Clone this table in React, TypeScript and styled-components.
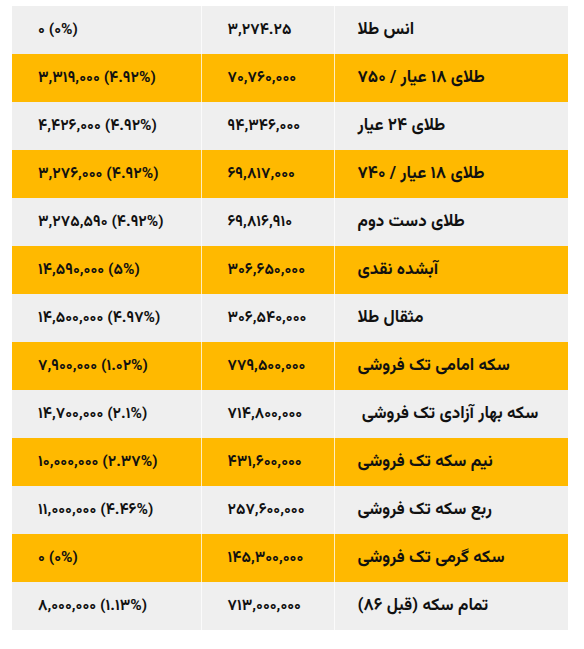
import React from 'react';
import styled, { createGlobalStyle } from 'styled-components';

const GlobalStyle = createGlobalStyle`
  html, body {
    margin: 0;
    padding: 0;
    background: #ffffff;
  }
`;

const Page = styled.div`
  padding: 6px 16px 20px 12px;
  font-family: 'Vazirmatn', 'Noto Sans Arabic', 'DejaVu Sans', sans-serif;
`;

const Table = styled.table`
  width: 556px;
  direction: rtl;
  border-collapse: collapse;
  table-layout: fixed;
`;

const Row = styled.tr<{ $alt: boolean }>`
  height: 48px;
  background: ${(p) => (p.$alt ? '#ffb900' : '#efefef')};
`;

const Cell = styled.td<{ $num?: boolean }>`
  padding: 0 0 0 ${(p) => (p.$num ? '26px' : '23px')};
  border-left: 1px solid rgba(255, 255, 255, 0.75);
  color: #111;
  font-size: ${(p) => (p.$num ? '15.5px' : '17px')};
  font-weight: 700;
  text-align: left;
  white-space: nowrap;
  direction: ${(p) => (p.$num ? 'ltr' : 'rtl')};
  unicode-bidi: isolate;

  &:last-child {
    border-left: none;
  }
`;

const rows = [
  ['انس طلا', '۳,۲۷۴.۲۵', '۰ (۰%)'],
  ['طلای ۱۸ عیار / ۷۵۰', '۷۰,۷۶۰,۰۰۰', '۳,۳۱۹,۰۰۰ (۴.۹۲%)'],
  ['طلای ۲۴ عیار', '۹۴,۳۴۶,۰۰۰', '۴,۴۲۶,۰۰۰ (۴.۹۲%)'],
  ['طلای ۱۸ عیار / ۷۴۰', '۶۹,۸۱۷,۰۰۰', '۳,۲۷۶,۰۰۰ (۴.۹۲%)'],
  ['طلای دست دوم', '۶۹,۸۱۶,۹۱۰', '۳,۲۷۵,۵۹۰ (۴.۹۲%)'],
  ['آبشده نقدی', '۳۰۶,۶۵۰,۰۰۰', '۱۴,۵۹۰,۰۰۰ (۵%)'],
  ['مثقال طلا', '۳۰۶,۵۴۰,۰۰۰', '۱۴,۵۰۰,۰۰۰ (۴.۹۷%)'],
  ['سکه امامی تک فروشی', '۷۷۹,۵۰۰,۰۰۰', '۷,۹۰۰,۰۰۰ (۱.۰۲%)'],
  ['سکه بهار آزادی تک فروشی\u00a0', '۷۱۴,۸۰۰,۰۰۰', '۱۴,۷۰۰,۰۰۰ (۲.۱%)'],
  ['نیم سکه تک فروشی', '۴۳۱,۶۰۰,۰۰۰', '۱۰,۰۰۰,۰۰۰ (۲.۳۷%)'],
  ['ربع سکه تک فروشی', '۲۵۷,۶۰۰,۰۰۰', '۱۱,۰۰۰,۰۰۰ (۴.۴۶%)'],
  ['سکه گرمی تک فروشی', '۱۴۵,۳۰۰,۰۰۰', '۰ (۰%)'],
  ['تمام سکه (قبل ۸۶)', '۷۱۳,۰۰۰,۰۰۰', '۸,۰۰۰,۰۰۰ (۱.۱۳%)'],
];

const App: React.FC = () => {
  return (
    <Page>
      <GlobalStyle />
      <Table>
        <colgroup>
          <col style={{ width: 234 }} />
          <col style={{ width: 133 }} />
          <col style={{ width: 189 }} />
        </colgroup>
        <tbody>
          {rows.map(([name, price, change], i) => (
            <Row key={i} $alt={i % 2 === 1}>
              <Cell>{name}</Cell>
              <Cell $num>{price}</Cell>
              <Cell $num>{change}</Cell>
            </Row>
          ))}
        </tbody>
      </Table>
    </Page>
  );
};

export default App;
